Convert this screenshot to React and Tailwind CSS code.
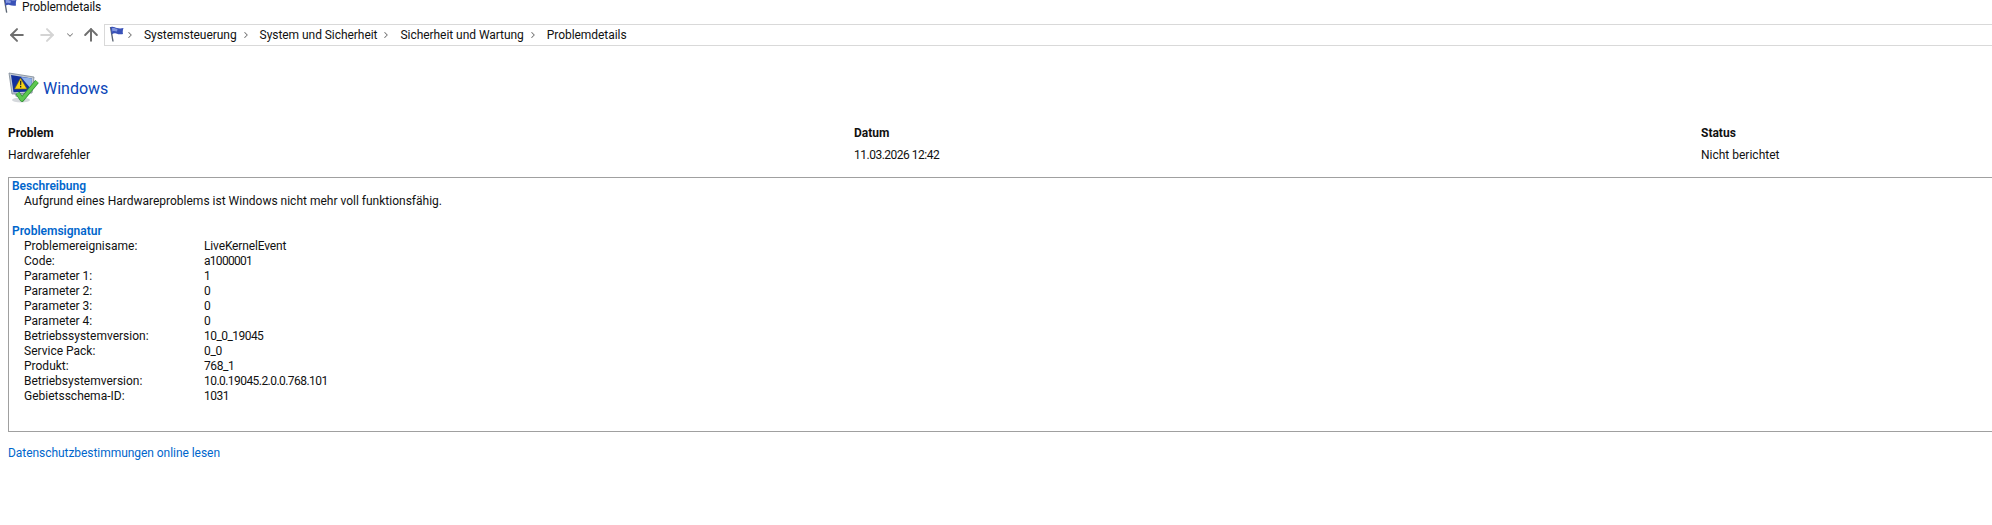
import { ArrowLeft, ArrowRight, ArrowUp, ChevronDown, ChevronRight } from "lucide-react";

const crumbs = ["Systemsteuerung", "System und Sicherheit", "Sicherheit und Wartung", "Problemdetails"];

const signature = [
  ["Problemereignisame:", "LiveKernelEvent", "tracking-[-0.15px]"],
  ["Code:", "a1000001", "tracking-[-0.7px]"],
  ["Parameter 1:", "1", ""],
  ["Parameter 2:", "0", ""],
  ["Parameter 3:", "0", ""],
  ["Parameter 4:", "0", ""],
  ["Betriebssystemversion:", "10_0_19045", "tracking-[-0.55px]"],
  ["Service Pack:", "0_0", "tracking-[-0.3px]"],
  ["Produkt:", "768_1", "tracking-[-0.4px]"],
  ["Betriebsystemversion:", "10.0.19045.2.0.0.768.101", "tracking-[-0.55px]"],
  ["Gebietsschema-ID:", "1031", "tracking-[-0.5px]"],
];

const columns = [
  ["Problem", "Hardwarefehler", "w-[846px]", ""],
  ["Datum", "11.03.2026 12:42", "w-[847px]", "tracking-[-0.5px]"],
  ["Status", "Nicht berichtet", "flex-1", ""],
];

const Flag = ({ className }) => (
  <svg viewBox="0 0 16 16" className={className}>
    <path d="M2.5 1 L5 15.5" stroke="#5a6472" strokeWidth="1.4" fill="none" />
    <path d="M2.6 1.2 C5 0 7 1.5 9 2 C11 2.5 13 2.6 15.5 2 C14.8 4 14.5 6 15 8 C12.5 8.8 10 8 8 7.4 C6.5 7 5 7.4 3.8 8.4 Z" fill="#3a52b8" />
    <path d="M4 2.2 C6 1.4 7.5 2.6 9.5 3 L9 5.6 C7 5 5.5 4.8 4.3 5.6 Z" fill="#8296de" />
  </svg>
);

const WindowsIcon = () => (
  <svg viewBox="0 0 32 32" className="w-8 h-8 shrink-0">
    <ellipse cx="13" cy="28" rx="9" ry="2.5" fill="#d5d8dc" />
    <path d="M6 21 L20 21 L19 25 L8 25 Z" fill="#aab2bb" />
    <path d="M1 1 L26 5 L24 21 L4 22 Z" fill="#c3cbd4" stroke="#7b8794" strokeWidth="0.8" />
    <path d="M3 3 L24 6.5 L22.5 19.5 L5.5 20.2 Z" fill="#13309c" />
    <path d="M13 5 L24 6.5 L23 17 Z" fill="#8fb1e8" />
    <path d="M12.5 6 L19 17 L6.5 17 Z" fill="#f7d417" stroke="#6b5a10" strokeWidth="0.6" />
    <path d="M12 8.8 h1.4 l-0.2 4.4 h-1 Z M12 14 h1.3 v1.4 h-1.3 Z" fill="#222" />
    <path d="M9.5 21 L14 27.5 L29 9.5" fill="none" stroke="#2f8f34" strokeWidth="4.6" strokeLinejoin="round" />
    <path d="M9.5 21 L14 27.5 L29 9.5" fill="none" stroke="#5ec850" strokeWidth="3.2" strokeLinejoin="round" />
  </svg>
);

const App = () => {
  return (
    <div className="w-[1992px] h-[525px] overflow-hidden bg-white text-[12px] text-[#111] font-['Roboto','Noto_Sans',sans-serif] leading-[15px]">
      <div className="flex items-center h-[14px] pl-[2px]">
        <Flag className="w-[15px] h-[15px] -mt-[3px]" />
        <span className="ml-[5px] tracking-[-0.1px]">Problemdetails</span>
      </div>

      <div className="flex items-center h-[22px] mt-[10px]">
        <div className="flex items-center w-[104px] pl-[7px] shrink-0">
          <ArrowLeft size={20} strokeWidth={2.4} className="text-[#6f6f6f]" />
          <ArrowRight size={20} strokeWidth={2.4} className="text-[#d4d4d4] ml-[10px]" />
          <ChevronDown size={10} strokeWidth={2.5} className="text-[#808080] ml-[8px]" />
          <ArrowUp size={20} strokeWidth={2.4} className="text-[#6f6f6f] ml-[6px]" />
        </div>
        <div className="flex items-center flex-1 h-[22px] border border-r-0 border-[#d9d9d9] pl-[3px]">
          <Flag className="w-4 h-4 -mt-[2px]" />
          <ChevronRight size={10} strokeWidth={2.5} className="text-[#707070] ml-[1px]" />
          {crumbs.map((c, i) => (
            <div key={c} className="flex items-center">
              <span className="ml-[9px] tracking-[-0.05px]">{c}</span>
              {i < crumbs.length - 1 && <ChevronRight size={10} strokeWidth={2.5} className="text-[#707070] ml-[4px]" />}
            </div>
          ))}
        </div>
      </div>

      <div className="flex items-center h-[32px] mt-[26px] pl-[8px]">
        <WindowsIcon />
        <span className="ml-[3px] text-[16px] text-[#0b46b8]">Windows</span>
      </div>

      <div className="flex pl-[8px] mt-[22px]">
        {columns.map(([head, value, width, track]) => (
          <div key={head} className={width}>
            <div className="font-bold h-[15px]">{head}</div>
            <div className={`mt-[7px] h-[15px] ${track}`}>{value}</div>
          </div>
        ))}
      </div>

      <div className="ml-[8px] mt-[14px] h-[255px] border border-r-0 border-[#a0a0a0] pl-[3px] pt-[1px]">
        <div className="text-[#0066cc] font-semibold">Beschreibung</div>
        <div className="pl-[12px]">Aufgrund eines Hardwareproblems ist Windows nicht mehr voll funktionsfähig.</div>
        <div className="text-[#0066cc] font-semibold mt-[15px]">Problemsignatur</div>
        <div className="pl-[12px]">
          {signature.map(([label, value, track]) => (
            <div key={label} className="flex">
              <span className="w-[180px] shrink-0">{label}</span>
              <span className={track}>{value}</span>
            </div>
          ))}
        </div>
      </div>

      <div className="pl-[8px] mt-[14px] text-[#0066cc] tracking-[-0.05px]">Datenschutzbestimmungen online lesen</div>
    </div>
  );
};

export default App;
